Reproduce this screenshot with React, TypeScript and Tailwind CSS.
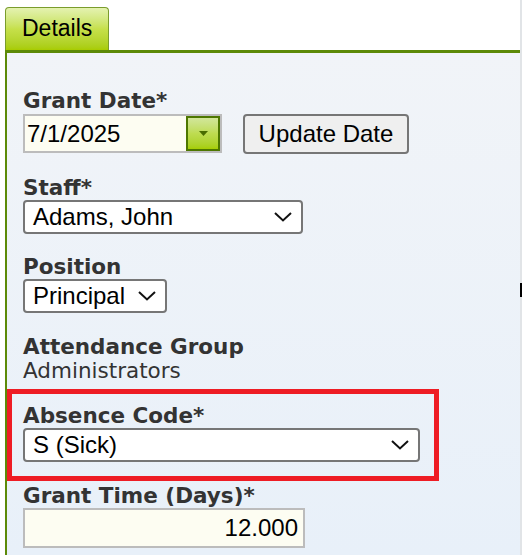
import { ReactNode } from "react";

const labelFont = { fontFamily: '"DejaVu Sans", Verdana, sans-serif' };
const inputFont = { fontFamily: '"Liberation Sans", Arial, sans-serif' };

function Chevron({ className = "" }: { className?: string }) {
  return (
    <svg width="18" height="10" viewBox="0 0 18 10" className={className}>
      <path d="M1 1 L9 8.5 L17 1" fill="none" stroke="#111" strokeWidth="2" />
    </svg>
  );
}

function Label({ children }: { children: ReactNode }) {
  return (
    <div className="text-[21.5px] leading-[24px] font-bold text-[#333]" style={labelFont}>
      {children}
    </div>
  );
}

function Select({ value, width }: { value: string; width: string }) {
  return (
    <div
      className={`${width} h-[34px] flex items-center justify-between rounded-[4px] border-2 border-[#767676] bg-white pl-[8px] pr-[9px] text-[24px] text-black`}
      style={inputFont}
    >
      <span>{value}</span>
      <Chevron />
    </div>
  );
}

export default function App() {
  return (
    <div className="relative w-[522px] h-[555px] bg-white overflow-hidden flex">
      <div className="w-[520px] flex flex-col">
        {/* tab strip */}
        <div className="h-[50px] pt-[7px] pl-[5px] flex items-end">
          <div
            className="w-[104px] h-[43px] rounded-t-[4px] border border-b-0 border-[#7a9c2c] bg-gradient-to-b from-[#e4f2b0] via-[#c6e04a] to-[#a8cc00] pl-[16px] pt-[7px] text-[23px] leading-[26px] text-black"
            style={inputFont}
          >
            Details
          </div>
        </div>

        {/* panel */}
        <div className="flex-1 ml-[5px] border-l-2 border-t-[3px] border-[#5c8a08] bg-gradient-to-b from-[#f1f4f8] to-[#e8f0f9] pl-[16px] pt-[36px]">
          <Label>Grant Date*</Label>
          <div className="mt-px flex items-start gap-[21px]">
            <div className="w-[199px] h-[39px] flex items-center justify-between border-2 border-[#bcbcbc] bg-[#fdfdf2]">
              <span className="pl-[2px] text-[24px] text-black" style={inputFont}>
                7/1/2025
              </span>
              <div className="w-[34px] h-[35px] border-2 border-[#4d7700] bg-gradient-to-b from-[#d2e69a] via-[#bedc50] to-[#a6ce00] flex items-center justify-center">
                <svg width="9" height="5" viewBox="0 0 9 5">
                  <path d="M0 0 H9 L4.5 5 Z" fill="#4a6c00" />
                </svg>
              </div>
            </div>
            <button
              className="w-[166px] h-[40px] rounded-[4px] border-2 border-[#767676] bg-[#efefef] text-[24px] text-black"
              style={inputFont}
            >
              Update Date
            </button>
          </div>

          <div className="mt-[22px]">
            <Label>Staff*</Label>
            <Select value="Adams, John" width="w-[280px]" />
          </div>

          <div className="mt-[21px]">
            <Label>Position</Label>
            <Select value="Principal" width="w-[144px]" />
          </div>

          <div className="mt-[22px]">
            <Label>Attendance Group</Label>
            <div className="text-[21.5px] leading-[24px] text-[#333]" style={labelFont}>
              Administrators
            </div>
          </div>

          <div className="mt-[6px] -ml-[16px] w-[432px] border-[5px] border-[#ee1c24] pl-[11px] pt-[10px] pb-[14px]">
            <Label>Absence Code*</Label>
            <Select value="S (Sick)" width="w-[397px]" />
          </div>

          <div className="mt-[3px]">
            <Label>Grant Time (Days)*</Label>
            <div
              className="w-[282px] h-[40px] flex items-center justify-end border-2 border-[#bcbcbc] bg-[#fdfdf2] pr-[5px] text-[24px] text-black"
              style={inputFont}
            >
              12.000
            </div>
          </div>
        </div>
      </div>

      {/* scrollbar edge */}
      <div className="relative w-[2px] h-full bg-[#e1e4e7]">
        <div className="absolute left-0 top-[283px] w-[2px] h-[14px] bg-black" />
      </div>
    </div>
  );
}
